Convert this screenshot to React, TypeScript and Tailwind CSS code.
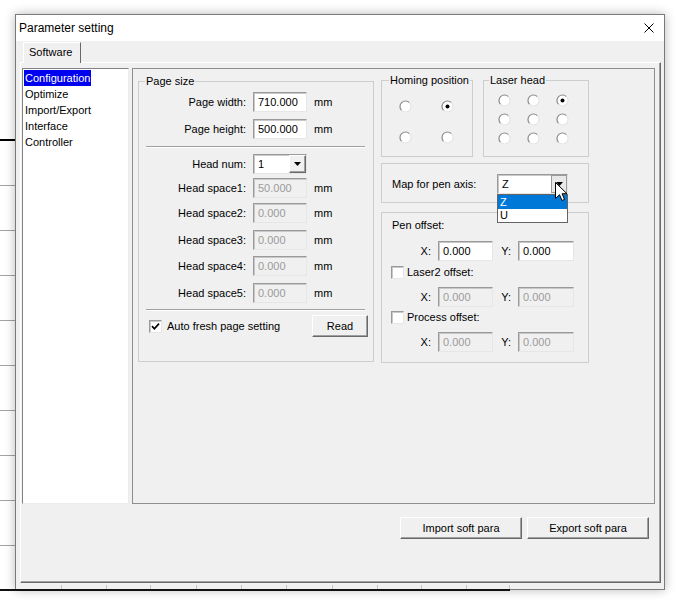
import React from 'react';

const sunken =
  'border border-t-[#9a9a9a] border-l-[#9a9a9a] border-r-[#e6e6e6] border-b-[#e6e6e6] shadow-[inset_1px_1px_0_#c8c8c8]';
const raised =
  'border border-t-white border-l-white border-r-[#696969] border-b-[#696969] shadow-[inset_-1px_-1px_0_#a0a0a0]';

const Field = ({ value, disabled = false, width = 'w-[54px]' }: { value: string; disabled?: boolean; width?: string }) => (
  <div
    className={`${sunken} ${width} h-[20px] flex items-center pl-[4px] ${
      disabled ? 'bg-[#f0f0f0] text-[#9b9b9b]' : 'bg-white text-black'
    }`}
  >
    {value}
  </div>
);

const Arrow = () => (
  <svg width="7" height="4" viewBox="0 0 7 4">
    <polygon points="0,0 7,0 3.5,4" fill="#000" />
  </svg>
);

const Combo = ({ value, width }: { value: string; width: string }) => (
  <div className={`${sunken} ${width} h-[20px] bg-white flex items-stretch`}>
    <span className="flex-1 pl-[4px] leading-[18px]">{value}</span>
    <div className={`${raised} w-[17px] bg-[#f0f0f0] flex items-center justify-center`}>
      <Arrow />
    </div>
  </div>
);

const CheckBox = ({ checked = false }: { checked?: boolean }) => (
  <div className={`${sunken} w-[13px] h-[13px] bg-white flex items-center justify-center shrink-0`}>
    {checked && (
      <svg width="9" height="9" viewBox="0 0 9 9">
        <path d="M1 4.2 L3.4 6.8 L8 1.6" stroke="#000" strokeWidth="1.7" fill="none" />
      </svg>
    )}
  </div>
);

const Radio = ({ checked = false }: { checked?: boolean }) => (
  <svg width="13" height="13" viewBox="0 0 13 13">
    <circle cx="6.5" cy="6.5" r="5.5" fill="#fff" />
    <path d="M2.6 10.4 A5.5 5.5 0 0 1 10.4 2.6" stroke="#8a8a8a" strokeWidth="1.2" fill="none" />
    <path d="M10.4 2.6 A5.5 5.5 0 0 1 2.6 10.4" stroke="#e4e4e4" strokeWidth="1.2" fill="none" />
    {checked && <circle cx="6.5" cy="6.5" r="2" fill="#000" />}
  </svg>
);

const Button = ({ label, width }: { label: string; width: string }) => (
  <div className={`${raised} ${width} h-[22px] bg-[#f0f0f0] flex items-center justify-center`}>{label}</div>
);

const Row = ({ label, children, mt }: { label: string; children: React.ReactNode; mt: string }) => (
  <div className={`flex items-center h-[20px] ${mt}`}>
    <span className="w-[107px] text-right">{label}</span>
    <div className="ml-[7px]">{children}</div>
  </div>
);

const Mm = () => <span className="ml-[7px]">mm</span>;

const Separator = ({ mt }: { mt: string }) => (
  <div className={`${mt} ml-[7px] mr-[8px]`}>
    <div className="h-px bg-[#a0a0a0]" />
    <div className="h-px bg-white" />
  </div>
);

const XYRow = ({ disabled, mt }: { disabled: boolean; mt: string }) => (
  <div className={`flex items-center pl-[33px] ${mt}`}>
    <span className="w-[16px] text-right">X:</span>
    <div className="ml-[7px]">
      <Field value="0.000" disabled={disabled} width="w-[55px]" />
    </div>
    <span className="w-[18px] text-right">Y:</span>
    <div className="ml-[7px]">
      <Field value="0.000" disabled={disabled} width="w-[56px]" />
    </div>
  </div>
);

const treeItems = ['Configuration', 'Optimize', 'Import/Export', 'Interface', 'Controller'];
const bgLines = [185, 230, 275, 320, 365, 410, 455, 500, 545];
const ticks = [61, 106, 150, 196, 241, 286, 332, 377, 421, 466, 509];

export default function App() {
  return (
    <div className="relative w-[681px] h-[600px] bg-white overflow-hidden pt-[14px] pl-[15px] font-['Liberation_Sans',Arial,sans-serif] text-[11px] text-black">
      {/* drawing behind the dialog */}
      <div className="absolute left-0 top-[139px] w-[15px] h-[2px] bg-black" />
      {bgLines.map((y) => (
        <div key={y} className="absolute left-0 w-[15px] h-px bg-[#a3a3a3]" style={{ top: y }} />
      ))}
      <div className="absolute left-0 top-[589px] w-[510px] h-[2px] bg-[#111] z-20" />
      {ticks.map((x) => (
        <div key={x} className="absolute top-[585px] w-px h-[4px] bg-[#c4c4c4] z-20" style={{ left: x }} />
      ))}

      {/* dialog window */}
      <div className="relative z-10 w-[650px] h-[576px] bg-[#f0f0f0] border border-[#7a7a7a] shadow-[0_0_10px_rgba(0,0,0,0.28)] flex flex-col">
        <div className="h-[26px] bg-white flex items-center justify-between pl-[3px] pr-[10px] text-[12px]">
          <span>Parameter setting</span>
          <svg width="10" height="10" viewBox="0 0 10 10">
            <path d="M0.5 0.5 L9.5 9.5 M9.5 0.5 L0.5 9.5" stroke="#000" strokeWidth="1" />
          </svg>
        </div>

        <div className="flex flex-col pl-[4px] pr-[3px]">
          {/* tab */}
          <div className="relative z-10 mt-[1px] ml-[3px] -mb-px w-[58px] h-[21px] bg-[#f0f0f0] border-l border-t border-l-white border-t-white border-r border-r-[#696969] pl-[5px] leading-[19px]">
            Software
          </div>

          {/* tab pane */}
          <div className={`h-[521px] flex flex-col pt-[5px] pl-[1px] ${raised}`}>
            <div className="flex gap-[3px] pr-[5px]">
              {/* tree */}
              <div className="w-[107px] h-[436px] bg-white border border-t-[#828282] border-l-[#828282] border-r-[#ececec] border-b-[#ececec] pt-[1px] pl-[1px]">
                {treeItems.map((item, i) => (
                  <div key={item} className="h-[16px] leading-[16px]">
                    <span className={`inline-block px-[1px] ${i === 0 ? 'bg-[#0000f0] text-white' : ''}`}>{item}</span>
                  </div>
                ))}
              </div>

              {/* content panel */}
              <div className="flex-1 h-[436px] border border-[#8e8e8e] flex items-start pt-[5px] pl-[5px] gap-[7px]">
                {/* Page size */}
                <fieldset className="w-[236px] border border-[#cdcdcd] pb-[24px]">
                  <legend className="ml-[6px] px-[1px] leading-[14px]">Page size</legend>
                  <Row label="Page width:" mt="mt-[4px]">
                    <div className="flex items-center">
                      <Field value="710.000" />
                      <Mm />
                    </div>
                  </Row>
                  <Row label="Page height:" mt="mt-[7px]">
                    <div className="flex items-center">
                      <Field value="500.000" />
                      <Mm />
                    </div>
                  </Row>
                  <Separator mt="mt-[7px]" />
                  <Row label="Head num:" mt="mt-[6px]">
                    <Combo value="1" width="w-[54px]" />
                  </Row>
                  <Row label="Head space1:" mt="mt-[4px]">
                    <div className="flex items-center">
                      <Field value="50.000" disabled />
                      <Mm />
                    </div>
                  </Row>
                  <Row label="Head space2:" mt="mt-[5px]">
                    <div className="flex items-center">
                      <Field value="0.000" disabled />
                      <Mm />
                    </div>
                  </Row>
                  <Row label="Head space3:" mt="mt-[7px]">
                    <div className="flex items-center">
                      <Field value="0.000" disabled />
                      <Mm />
                    </div>
                  </Row>
                  <Row label="Head space4:" mt="mt-[6px]">
                    <div className="flex items-center">
                      <Field value="0.000" disabled />
                      <Mm />
                    </div>
                  </Row>
                  <Row label="Head space5:" mt="mt-[7px]">
                    <div className="flex items-center">
                      <Field value="0.000" disabled />
                      <Mm />
                    </div>
                  </Row>
                  <Separator mt="mt-[6px]" />
                  <div className="mt-[4px] h-[22px] flex items-center justify-between pl-[10px] pr-[5px]">
                    <div className="flex items-center gap-[5px]">
                      <CheckBox checked />
                      <span>Auto fresh page setting</span>
                    </div>
                    <Button label="Read" width="w-[56px]" />
                  </div>
                </fieldset>

                {/* right column */}
                <div className="w-[208px] -mt-px flex flex-col">
                  <div className="flex gap-[10px]">
                    <fieldset className="w-[92px] h-[84px] border border-[#cdcdcd]">
                      <legend className="ml-[7px] px-[1px] leading-[14px]">Homing position</legend>
                      <div className="grid grid-cols-[13px_13px] gap-x-[29px] gap-y-[18px] pl-[17px] pt-[13px]">
                        <Radio />
                        <Radio checked />
                        <Radio />
                        <Radio />
                      </div>
                    </fieldset>
                    <fieldset className="w-[106px] h-[84px] border border-[#cdcdcd]">
                      <legend className="ml-[5px] px-[1px] leading-[14px]">Laser head</legend>
                      <div className="grid grid-cols-[13px_13px_13px] gap-x-[16px] gap-y-[6px] pl-[14px] pt-[7px]">
                        <Radio />
                        <Radio />
                        <Radio checked />
                        <Radio />
                        <Radio />
                        <Radio />
                        <Radio />
                        <Radio />
                        <Radio />
                      </div>
                    </fieldset>
                  </div>

                  <div className="mt-[6px] h-[40px] border border-[#cdcdcd] flex items-start pt-[10px] pl-[10px]">
                    <span className="w-[105px] leading-[20px]">Map for pen axis:</span>
                    <div className="relative">
                      <div className={`${sunken} w-[71px] h-[20px] bg-white flex items-stretch`}>
                        <span className="flex-1 pl-[4px] leading-[18px]">Z</span>
                        <div className="w-[16px] bg-[#e8e8e8] border border-[#9a9a9a] flex items-center justify-center">
                          <Arrow />
                        </div>
                      </div>
                      <div className="absolute z-30 top-[20px] left-0 w-[71px] bg-white border border-[#646464]">
                        <div className="h-[14px] leading-[14px] pl-[2px] bg-[#0078d7] text-white">Z</div>
                        <div className="h-[13px] leading-[13px] pl-[2px]">U</div>
                      </div>
                      <svg
                        className="absolute z-40 left-[58px] top-[8px] pointer-events-none"
                        width="13"
                        height="20"
                        viewBox="0 0 13 20"
                      >
                        <path
                          d="M0.5 0.5 L0.5 16.5 L4.5 12.7 L7 18.5 L9.5 17.4 L7.1 11.7 L12 11.7 Z"
                          fill="#fff"
                          stroke="#000"
                          strokeWidth="1"
                          strokeLinejoin="round"
                        />
                      </svg>
                    </div>
                  </div>

                  <div className="mt-[9px] h-[151px] border border-[#cdcdcd] flex flex-col pt-[5px]">
                    <span className="pl-[10px] leading-[14px]">Pen offset:</span>
                    <XYRow disabled={false} mt="mt-[9px]" />
                    <div className="mt-[5px] h-[13px] flex items-center pl-[9px] gap-[3px]">
                      <CheckBox />
                      <span>Laser2 offset:</span>
                    </div>
                    <XYRow disabled mt="mt-[8px]" />
                    <div className="mt-[4px] h-[13px] flex items-center pl-[9px] gap-[3px]">
                      <CheckBox />
                      <span>Process offset:</span>
                    </div>
                    <XYRow disabled mt="mt-[8px]" />
                  </div>
                </div>
              </div>
            </div>

            <div className="mt-[13px] flex justify-end gap-[5px] pr-[11px]">
              <Button label="Import soft para" width="w-[122px]" />
              <Button label="Export soft para" width="w-[122px]" />
            </div>
          </div>
        </div>
      </div>
    </div>
  );
}
